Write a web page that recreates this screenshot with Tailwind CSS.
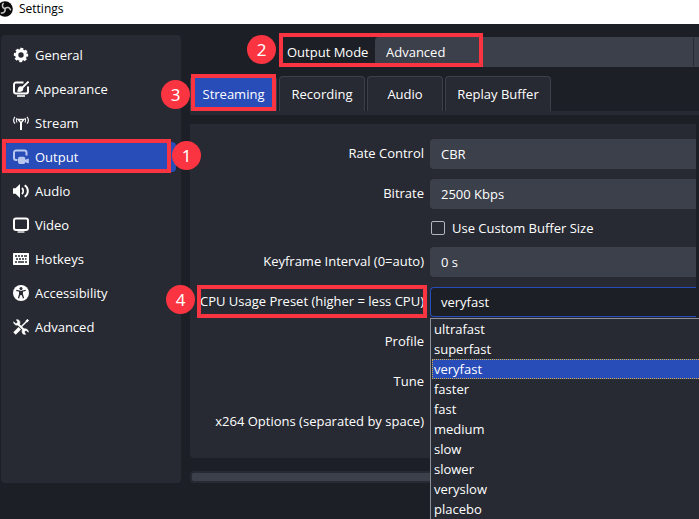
<!DOCTYPE html>
<html lang="en">
<head>
<meta charset="utf-8">
<title>Settings</title>
<script src="https://cdn.jsdelivr.net/npm/@tailwindcss/browser@4"></script>
</head>
<body class="relative flex min-h-screen flex-col overflow-hidden bg-[#1d1f26] font-['Open_Sans','Noto_Sans',sans-serif] text-[13px] leading-5 text-white">

<header class="flex h-6 items-center gap-1.5 bg-white pb-1.5 text-black">
  <svg class="h-4 w-[13px]" viewBox="3 0 13 16" aria-hidden="true">
    <circle cx="8" cy="8" r="7.8" fill="#0a0a0a"/>
    <g fill="none" stroke="#c9c9c9" stroke-width="1.5" stroke-linecap="round">
      <path d="M8 7.600C5.200 6.800 4.800 4.300 6.200 2.600"/>
      <path d="M8 7.600C10 5.500 12.700 6.500 13.500 8.700"/>
      <path d="M8 7.600C8.800 10.500 6.600 12.600 4.300 12"/>
    </g>
  </svg>
  <h1 class="text-[12px] leading-4">Settings</h1>
</header>

<div class="flex grow items-start gap-[9px] pl-px">
  <nav aria-label="Settings sections" class="mt-[11px] h-[448px] w-[180px] shrink-0 rounded bg-[#272a33] px-[5px] py-[5px]">
    <ul class="flex flex-col gap-1">
      <li><a href="#general" class="flex h-[30px] items-center gap-1.5 rounded pl-[7px]">
        <svg class="size-4" viewBox="0 0 16 16" aria-hidden="true" fill="none" stroke="#fff"><circle cx="8" cy="8" r="4.300" stroke-width="3.200"/><circle cx="8" cy="8" r="6.100" stroke-width="2.200" stroke-dasharray="2.800 1.991" transform="rotate(-13 8 8)"/></svg>General</a></li>
      <li><a href="#appearance" class="flex h-[30px] items-center gap-1.5 rounded pl-[7px]">
        <svg class="size-4" viewBox="0 0 16 16" aria-hidden="true" fill="none" stroke="#fff"><path d="M10.500 1.500H3A2 2 0 0 0 1 3.500v7a2 2 0 0 0 2 2h10a2 2 0 0 0 2-2V5.500" stroke-width="2"/><path d="M4 15h8" stroke-width="1.600"/><path d="M15.500.6 9.500 6.500" stroke-width="1.800"/><path d="M4 10.300c1-.6.6-2.300 1.500-4 1-1.500 3.500-1.500 4.400 0 1 2.100-.1 4.200-2.300 4.500-1.400.2-2.900.1-3.600-.5Z" fill="#fff" stroke="none"/></svg>Appearance</a></li>
      <li><a href="#stream" class="flex h-[30px] items-center gap-1.5 rounded pl-[7px]">
        <svg class="size-4" viewBox="0 0 16 16" aria-hidden="true" fill="none" stroke="#fff"><path d="M2 1.800c-1.800 2.200-1.800 4.700 0 6.900M14 1.800c1.800 2.200 1.800 4.700 0 6.900" stroke-width="1.100"/><path d="M4 3c-1 1.500-1 3 0 4.500M12 3c1 1.500 1 3 0 4.500" stroke-width="1.100"/><path d="M5.200 4.500h5.600L8 8Z" stroke-width="1.400"/><path d="M8 7v8" stroke-width="2"/></svg>Stream</a></li>
      <li><a href="#output" aria-current="page" class="flex h-[30px] items-center gap-1.5 rounded bg-[#284cb8] pl-[7px]">
        <svg class="size-4" viewBox="0 0 16 16" aria-hidden="true" fill="none" stroke="#b9c7ef"><path d="M4.500 11H3a2 2 0 0 1-2-2V3.500a2 2 0 0 1 2-2h8.500a2 2 0 0 1 2 2V6.500" stroke-width="2"/><path d="M5 9.700a2 2 0 0 1 2-2h3.500a2 2 0 0 1 1.800 2v1l3.500-1.200v5l-3.500-1.200a1.800 1.800 0 0 1-1.800 1.700H7a2 2 0 0 1-2-2Z" fill="#b9c7ef" stroke="none"/></svg>Output</a></li>
      <li><a href="#audio" class="flex h-[30px] items-center gap-1.5 rounded pl-[7px]">
        <svg class="size-4" viewBox="0 0 16 16" aria-hidden="true" fill="none" stroke="#fff"><path d="M0 5.300h2.500L7 1v14L2.500 10.700H0Z" fill="#fff" stroke="none"/><path d="M9 5c1.500 1.600 1.500 4.400 0 6M11.700 2.200c4.200 2.700 4.200 8.900 0 11.600" stroke-width="1.900"/></svg>Audio</a></li>
      <li><a href="#video" class="flex h-[30px] items-center gap-1.5 rounded pl-[7px]">
        <svg class="size-4" viewBox="0 0 16 16" aria-hidden="true" fill="none" stroke="#fff"><rect x="1" y="1.500" width="14" height="11.500" rx="2" stroke-width="2"/><path d="M4.500 15h7" stroke-width="1.300"/></svg>Video</a></li>
      <li><a href="#hotkeys" class="flex h-[30px] items-center gap-1.5 rounded pl-[7px]">
        <svg class="size-4" viewBox="0 0 16 16" aria-hidden="true"><rect y="2" width="16" height="12" rx=".7" fill="#fff"/><path d="M2 5h2m1 0h2m1 0h2m1 0h3M3 8h2m1 0h2m1 0h2m1 0h1.500M2 11h2m1 0h6m1 0h2" stroke="#272a33" stroke-width="1.600" fill="none"/></svg>Hotkeys</a></li>
      <li><a href="#accessibility" class="flex h-[30px] items-center gap-1.5 rounded pl-[7px]">
        <svg class="size-4" viewBox="0 0 16 16" aria-hidden="true"><circle cx="8" cy="8" r="8" fill="#fff"/><circle cx="8" cy="3.400" r="1.500" fill="#272a33"/><path d="M3.300 5.400 6.700 6.200v3L5.500 13.300M12.700 5.400 9.300 6.200v3l1.200 4.100" stroke="#272a33" stroke-width="1.300" fill="none"/><path d="M6.300 5.800h3.400v4.400H6.300Z" fill="#272a33"/></svg>Accessibility</a></li>
      <li><a href="#advanced" class="flex h-[30px] items-center gap-1.5 rounded pl-[7px]">
        <svg class="size-4" viewBox="0 0 16 16" aria-hidden="true" fill="none" stroke="#fff"><path d="m4.500 4.500 7.500 7.500" stroke-width="2"/><path d="M.6 2.800 3 4.800 4.800 3.200 3.400.7c2.500-.4 4.100 1.500 3.400 3.900C5.900 6.900.8 7 .6 2.800ZM15.400 13.200l-2.400-2-1.800 1.600 1.400 2.500c-2.500.4-4.100-1.500-3.400-3.900.9-2.300 6-2.400 6.200 1.800Z" fill="#fff" stroke-width=".6"/><path d="M15 1 8 8" stroke-width="1.400"/><path d="m6.800 9.200-5.300 5.300" stroke-width="3.400"/><path d="m16 1.500-1.600-1.500-2 2 1.600 1.600Z" fill="#fff" stroke="none"/></svg>Advanced</a></li>
    </ul>
  </nav>

  <main class="min-w-0 grow">
    <div class="mt-[13px] flex items-center">
      <label for="mode" class="ml-[97px] w-[88px] shrink-0">Output Mode</label>
      <div class="flex min-w-0 grow rounded-l bg-[#3c404b] py-px">
        <select id="mode" class="h-7 min-w-0 grow appearance-none rounded-l bg-transparent pl-[11px] outline-none"><option>Advanced</option><option>Simple</option></select>
        <span class="w-1.5 border-l border-[#272a33]"></span>
      </div>
    </div>

    <div role="tablist" class="mt-[9px] flex h-[35px] gap-0.5">
      <button role="tab" aria-selected="true" class="w-[87px] rounded-t border border-b-0 border-[#3c404b] bg-[#284cb8]">Streaming</button>
      <button role="tab" aria-selected="false" class="w-[86px] rounded-t border border-b-0 border-[#3c404b] bg-[#272a33]">Recording</button>
      <button role="tab" aria-selected="false" class="w-[76px] rounded-t border border-b-0 border-[#3c404b] bg-[#272a33]">Audio</button>
      <button role="tab" aria-selected="false" class="w-[106px] rounded-t border border-b-0 border-[#3c404b] bg-[#272a33]">Replay Buffer</button>
    </div>
    <div class="h-1 bg-[#272a33]"></div>

    <form class="mt-[9px] mr-[3px] grid grid-cols-[234px_minmax(0,1fr)] items-center gap-x-1.5 gap-y-2.5 rounded-bl bg-[#272a33] pt-[15px] pb-[21px]">
      <label for="rate" class="pb-0.5 text-right">Rate Control</label>
      <select id="rate" class="h-[30px] appearance-none rounded-l bg-[#3c404b] pl-[11px]"><option>CBR</option></select>
      <label for="bitrate" class="pb-0.5 text-right">Bitrate</label>
      <input id="bitrate" value="2500 Kbps" class="h-[30px] rounded-l bg-[#3c404b] pl-[11px]">
      <div class="col-start-2 flex h-[18px] items-center gap-[7px] pl-px">
        <input id="buffer" type="checkbox" class="size-3.5 appearance-none rounded-xs border border-[#b4b6bc]">
        <label for="buffer">Use Custom Buffer Size</label>
      </div>
      <label for="keyframe" class="pb-0.5 text-right">Keyframe Interval (0=auto)</label>
      <input id="keyframe" value="0 s" class="h-[30px] rounded-l bg-[#3c404b] pl-[11px]">
      <label for="preset" class="pb-0.5 text-right whitespace-nowrap">CPU Usage Preset (higher = less CPU)</label>
      <div class="relative">
        <button id="preset" type="button" role="combobox" aria-expanded="true" aria-controls="presets" class="block h-[30px] w-full rounded-l border border-r-0 border-[#284cb8] bg-[#1d1f26] pl-2.5 text-left">veryfast</button>
        <ul id="presets" role="listbox" aria-label="CPU usage preset" class="absolute top-[31px] right-[-3px] left-0 z-10 border-t border-l border-[#8d8f96] bg-[#272a33] pl-px">
          <li role="option" class="h-5 pl-0.5">ultrafast</li>
          <li role="option" class="h-5 pl-0.5">superfast</li>
          <li role="option" aria-selected="true" class="h-5 border border-r-0 border-dotted border-[#d7b347] bg-[#284cb8] pl-px leading-[18px]">veryfast</li>
          <li role="option" class="h-5 pl-0.5">faster</li>
          <li role="option" class="h-5 pl-0.5">fast</li>
          <li role="option" class="h-5 pl-0.5">medium</li>
          <li role="option" class="h-5 pl-0.5">slow</li>
          <li role="option" class="h-5 pl-0.5">slower</li>
          <li role="option" class="h-5 pl-0.5">veryslow</li>
          <li role="option" class="h-5 pl-0.5">placebo</li>
        </ul>
      </div>
      <label for="profile" class="pb-0.5 text-right">Profile</label>
      <select id="profile" class="h-[30px] appearance-none rounded-l bg-[#3c404b]"></select>
      <label for="tune" class="pb-0.5 text-right">Tune</label>
      <select id="tune" class="h-[30px] appearance-none rounded-l bg-[#3c404b]"></select>
      <label for="x264" class="pb-0.5 text-right">x264 Options (separated by space)</label>
      <input id="x264" class="h-[30px] rounded-l bg-[#3c404b]">
    </form>

    <div class="mt-[13px] h-3 rounded bg-[#272a33] p-0.5"><div class="h-2 w-4/5 rounded-xs bg-[#3c404b]"></div></div>
  </main>
</div>

<!-- Numbered step callouts laid over the window -->
<div class="pointer-events-none absolute inset-0 z-20 font-['Noto_Sans',sans-serif] text-[17px] leading-[29px]">
  <div class="absolute top-[139px] left-[2px] h-[34px] w-[169px] border-4 border-[#fb3441]"></div>
  <div class="absolute top-[33px] left-[279px] h-[34px] w-[204px] border-4 border-[#fb3441]"></div>
  <div class="absolute top-[74px] left-[191px] h-[37px] w-[85px] border-4 border-[#fb3441]"></div>
  <div class="absolute top-[285px] left-[197px] h-[33px] w-[230px] border-4 border-[#fb3441]"></div>
  <span class="absolute top-[141px] left-[172px] size-[29px] rounded-full bg-[#fb3441] text-center">1</span>
  <span class="absolute top-[35px] left-[247px] size-[29px] rounded-full bg-[#fb3441] text-center">2</span>
  <span class="absolute top-[80px] left-[161px] size-[29px] rounded-full bg-[#fb3441] text-center">3</span>
  <span class="absolute top-[285px] left-[166px] size-[29px] rounded-full bg-[#fb3441] text-center">4</span>
</div>
</body>
</html>
